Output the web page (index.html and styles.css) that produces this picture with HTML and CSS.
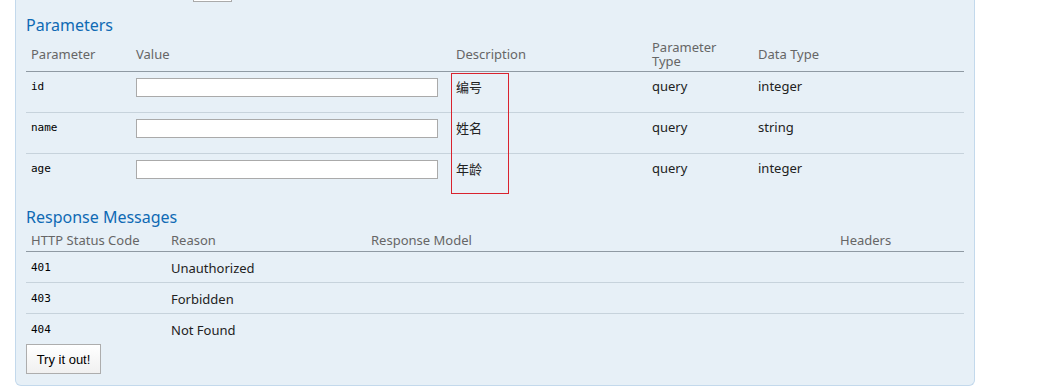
FILE: index.html
```html
<!DOCTYPE html>
<html lang="en">
<head>
    <meta charset="UTF-8">
    <title>Swagger operation</title>
    <link rel="stylesheet" href="styles.css">
</head>
<body>
    <div class="content">
        <div class="select-tail"></div>
        <h4>Parameters</h4>
        <table class="params">
            <thead>
                <tr>
                    <th class="c-name">Parameter</th>
                    <th class="c-value">Value</th>
                    <th class="c-desc">Description</th>
                    <th class="c-ptype">Parameter<br>Type</th>
                    <th class="c-dtype">Data Type</th>
                </tr>
            </thead>
            <tbody>
                <tr>
                    <td class="code">id</td>
                    <td><input type="text"></td>
                    <td class="desc"><span class="mark"></span>编号</td>
                    <td>query</td>
                    <td>integer</td>
                </tr>
                <tr>
                    <td class="code">name</td>
                    <td><input type="text"></td>
                    <td class="desc">姓名</td>
                    <td>query</td>
                    <td>string</td>
                </tr>
                <tr>
                    <td class="code">age</td>
                    <td><input type="text"></td>
                    <td class="desc">年龄</td>
                    <td>query</td>
                    <td>integer</td>
                </tr>
            </tbody>
        </table>
        <h4 class="resp-title">Response Messages</h4>
        <table class="responses">
            <thead>
                <tr>
                    <th class="r-code">HTTP Status Code</th>
                    <th class="r-reason">Reason</th>
                    <th class="r-model">Response Model</th>
                    <th class="r-headers">Headers</th>
                </tr>
            </thead>
            <tbody>
                <tr><td class="code">401</td><td>Unauthorized</td><td></td><td></td></tr>
                <tr><td class="code">403</td><td>Forbidden</td><td></td><td></td></tr>
                <tr><td class="code">404</td><td>Not Found</td><td></td><td></td></tr>
            </tbody>
        </table>
        <button class="try">Try it out!</button>
    </div>
</body>
</html>
```

FILE: styles.css
```css
* {
    margin: 0;
    padding: 0;
}
body {
    background: #fff;
    font-family: "Noto Sans", "Noto Sans CJK SC", sans-serif;
}
.content {
    width: 960px;
    margin-left: 15px;
    box-sizing: border-box;
    padding: 0 10px 11px;
    background: #e7f0f7;
    border: 1px solid #c3d9ec;
    border-top: none;
    border-radius: 0 0 6px 6px;
}
.select-tail {
    width: 37px;
    height: 1px;
    margin-left: 167px;
    border: 1px solid #aaa;
    border-top: none;
    background: #fff;
}
h4 {
    color: #0f6ab4;
    font-size: 16px;
    font-weight: normal;
    line-height: 22px;
    margin-top: 12px;
    margin-bottom: 1px;
}
table {
    width: 100%;
    border-collapse: collapse;
}
th {
    color: #666;
    font-size: 13px;
    font-weight: normal;
    text-align: left;
    vertical-align: middle;
    line-height: 14px;
    padding: 3px 5px;
    border-bottom: 1px solid #8f9aa3;
}
td {
    color: #222;
    font-size: 13px;
    vertical-align: top;
    padding: 6px 5px;
    height: 28px;
    line-height: 17px;
    border-bottom: 1px solid #c7d3dc;
}
tbody tr:last-child td {
    border-bottom: none;
}
td.code {
    font-family: "DejaVu Sans Mono", monospace;
    font-size: 11px;
    color: #000;
}
td.desc {
    position: relative;
    font-size: 13px;
    line-height: 19px;
}
.mark {
    position: absolute;
    left: 0;
    top: 1px;
    width: 56px;
    height: 119px;
    border: 1px solid #d9232e;
}
.c-name { width: 95px; }
.c-value { width: 310px; }
.c-desc { width: 186px; }
.c-ptype { width: 96px; }
input {
    display: block;
    width: 302px;
    height: 19px;
    box-sizing: border-box;
    border: 1px solid #aaa;
    background: #fff;
}
.resp-title {
    margin-top: 12px;
    margin-bottom: 0;
}
.responses th {
    padding: 4px 5px 2px;
    line-height: 17px;
}
.responses td {
    height: 18px;
    padding: 7px 5px 5px;
    line-height: 18px;
}
.r-code { width: 130px; }
.r-reason { width: 190px; }
.r-model { width: 459px; }
.try {
    display: block;
    width: 75px;
    height: 30px;
    font-family: "Liberation Sans", Arial, sans-serif;
    font-size: 13px;
    color: #000;
    background: linear-gradient(#fff, #f0f0f0);
    border: 1px solid #adadad;
}
```
